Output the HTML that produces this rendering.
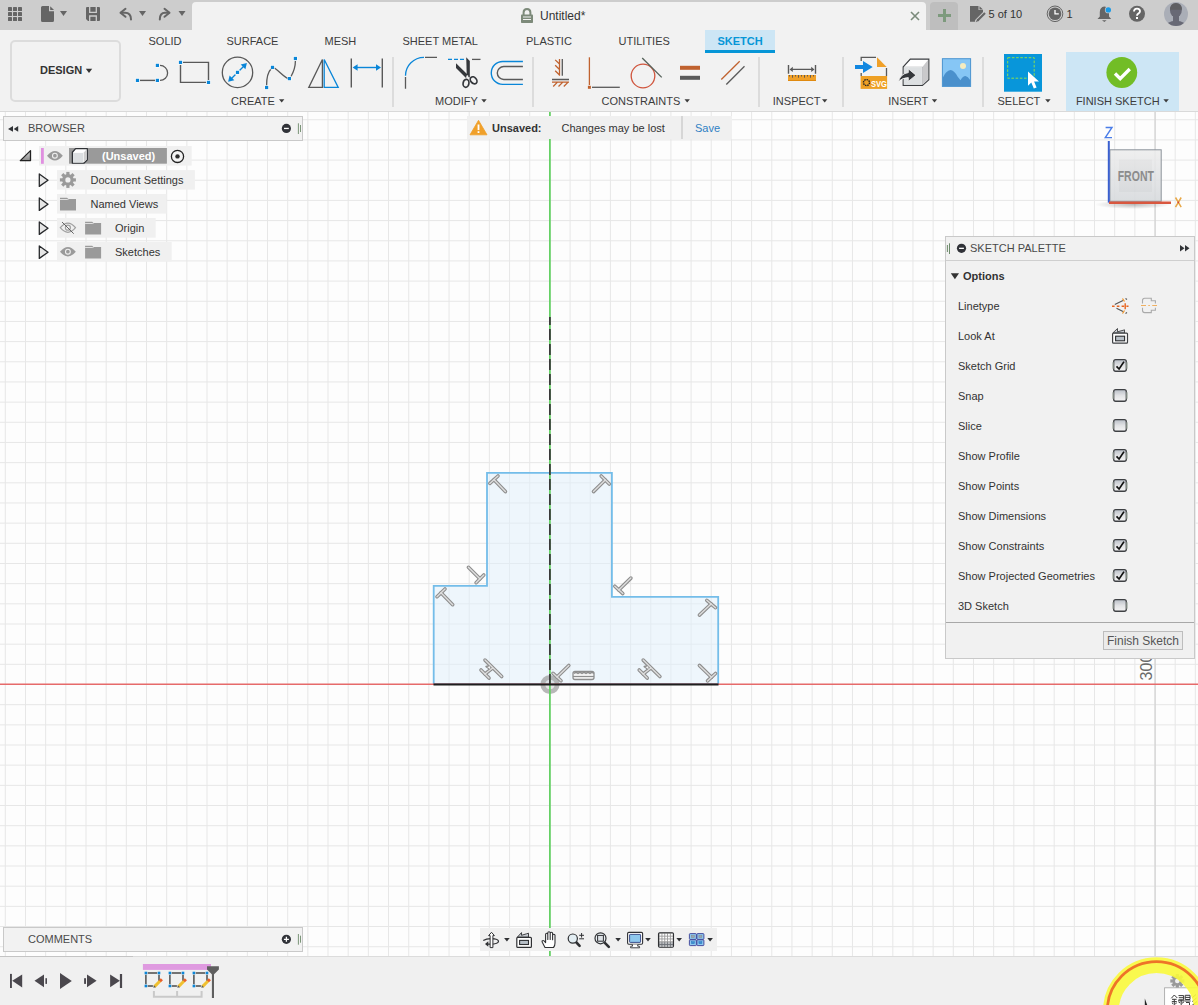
<!DOCTYPE html><html><head><meta charset="utf-8"><style>html,body{margin:0;padding:0;width:1198px;height:1005px;overflow:hidden;background:#fdfdfd;}body{position:relative;font-family:"Liberation Sans",sans-serif;}.a{position:absolute;} .t{position:absolute;white-space:nowrap;}</style></head><body><svg width="1198" height="1005" style="position:absolute;left:0;top:0"><rect x="0" y="111" width="1198" height="846" fill="#fdfdfd"/><path d="M5.31 111V956M25.48 111V956M45.65 111V956M65.82 111V956M85.99 111V956M106.16 111V956M126.33 111V956M146.50 111V956M166.67 111V956M186.84 111V956M207.01 111V956M227.18 111V956M247.35 111V956M267.52 111V956M287.69 111V956M307.86 111V956M328.03 111V956M348.20 111V956M368.37 111V956M388.54 111V956M408.71 111V956M428.88 111V956M449.05 111V956M469.22 111V956M489.39 111V956M509.56 111V956M529.73 111V956M549.90 111V956M570.07 111V956M590.24 111V956M610.41 111V956M630.58 111V956M650.75 111V956M670.92 111V956M691.09 111V956M711.26 111V956M731.43 111V956M751.60 111V956M771.77 111V956M791.94 111V956M812.11 111V956M832.28 111V956M852.45 111V956M872.62 111V956M892.79 111V956M912.96 111V956M933.13 111V956M953.30 111V956M973.47 111V956M993.64 111V956M1013.81 111V956M1033.98 111V956M1054.15 111V956M1074.32 111V956M1094.49 111V956M1114.66 111V956M1134.83 111V956M1155.00 111V956M1175.17 111V956M1195.34 111V956M0 119.74H1198M0 139.91H1198M0 160.08H1198M0 180.25H1198M0 200.42H1198M0 220.59H1198M0 240.76H1198M0 260.93H1198M0 281.10H1198M0 301.27H1198M0 321.44H1198M0 341.61H1198M0 361.78H1198M0 381.95H1198M0 402.12H1198M0 422.29H1198M0 442.46H1198M0 462.63H1198M0 482.80H1198M0 502.97H1198M0 523.14H1198M0 543.31H1198M0 563.48H1198M0 583.65H1198M0 603.82H1198M0 623.99H1198M0 644.16H1198M0 664.33H1198M0 684.50H1198M0 704.67H1198M0 724.84H1198M0 745.01H1198M0 765.18H1198M0 785.35H1198M0 805.52H1198M0 825.69H1198M0 845.86H1198M0 866.03H1198M0 886.20H1198M0 906.37H1198M0 926.54H1198M0 946.71H1198" stroke="#e7e7e7" stroke-width="1" fill="none"/><path d="M1155.1 111V956" stroke="#d2d2d2" stroke-width="1.2"/><text transform="translate(1151.8 680.4) rotate(-90)" font-family="Liberation Sans" font-size="16" fill="#6a6a6a">300</text><path d="M433.7 684.2V585.9H487V472.9H611.9V596.9H718.2V684.2Z" fill="#e0f0fb" fill-opacity="0.5" stroke="#74bde9" stroke-width="1.8"/><circle cx="550" cy="684.5" r="5" fill="#bdbdbd" fill-opacity="0.35"/><circle cx="550" cy="684.5" r="7.2" fill="none" stroke="#9c9c9c" stroke-opacity="0.72" stroke-width="4.8"/><line x1="549.9" y1="111" x2="549.9" y2="956" stroke="#66d166" stroke-width="1.8"/><line x1="0" y1="684.3" x2="1198" y2="684.3" stroke="#e66a6a" stroke-width="1.6"/><line x1="549.9" y1="317" x2="549.9" y2="684" stroke="#3a3a3a" stroke-width="1.8" stroke-dasharray="11 4" stroke-dashoffset="3"/><line x1="433.5" y1="684.4" x2="718.5" y2="684.4" stroke="#1e1e1e" stroke-width="2"/><line x1="494" y1="479.7" x2="505.4" y2="491.6" stroke="#8e8e8e" stroke-width="3.6" stroke-linecap="round"/><line x1="489.8" y1="483.4" x2="498" y2="476" stroke="#8e8e8e" stroke-width="3.6" stroke-linecap="round"/><line x1="605.2" y1="480" x2="593.5" y2="491.6" stroke="#8e8e8e" stroke-width="3.6" stroke-linecap="round"/><line x1="601.2" y1="476" x2="609.3" y2="484" stroke="#8e8e8e" stroke-width="3.6" stroke-linecap="round"/><line x1="479.9" y1="578.8" x2="468.4" y2="567.3" stroke="#8e8e8e" stroke-width="3.6" stroke-linecap="round"/><line x1="476.1" y1="582.7" x2="483.8" y2="575" stroke="#8e8e8e" stroke-width="3.6" stroke-linecap="round"/><line x1="441" y1="592.8" x2="452.7" y2="604.7" stroke="#8e8e8e" stroke-width="3.6" stroke-linecap="round"/><line x1="437" y1="596.7" x2="445" y2="589" stroke="#8e8e8e" stroke-width="3.6" stroke-linecap="round"/><line x1="618.8" y1="589.9" x2="630.9" y2="578.1" stroke="#8e8e8e" stroke-width="3.6" stroke-linecap="round"/><line x1="614.8" y1="586.2" x2="622.8" y2="593.6" stroke="#8e8e8e" stroke-width="3.6" stroke-linecap="round"/><line x1="711.1" y1="604" x2="699.4" y2="615.1" stroke="#8e8e8e" stroke-width="3.6" stroke-linecap="round"/><line x1="706.8" y1="600.3" x2="715.5" y2="607.7" stroke="#8e8e8e" stroke-width="3.6" stroke-linecap="round"/><line x1="711.5" y1="677.2" x2="699.4" y2="665.4" stroke="#8e8e8e" stroke-width="3.6" stroke-linecap="round"/><line x1="707.5" y1="680.9" x2="715.5" y2="673.5" stroke="#8e8e8e" stroke-width="3.6" stroke-linecap="round"/><line x1="557" y1="677" x2="568.8" y2="665.5" stroke="#8e8e8e" stroke-width="3.6" stroke-linecap="round"/><line x1="553" y1="673.3" x2="561" y2="680.8" stroke="#8e8e8e" stroke-width="3.6" stroke-linecap="round"/><line x1="494" y1="479.7" x2="505.4" y2="491.6" stroke="#dedede" stroke-width="1.4" stroke-linecap="round"/><line x1="489.8" y1="483.4" x2="498" y2="476" stroke="#dedede" stroke-width="1.4" stroke-linecap="round"/><line x1="605.2" y1="480" x2="593.5" y2="491.6" stroke="#dedede" stroke-width="1.4" stroke-linecap="round"/><line x1="601.2" y1="476" x2="609.3" y2="484" stroke="#dedede" stroke-width="1.4" stroke-linecap="round"/><line x1="479.9" y1="578.8" x2="468.4" y2="567.3" stroke="#dedede" stroke-width="1.4" stroke-linecap="round"/><line x1="476.1" y1="582.7" x2="483.8" y2="575" stroke="#dedede" stroke-width="1.4" stroke-linecap="round"/><line x1="441" y1="592.8" x2="452.7" y2="604.7" stroke="#dedede" stroke-width="1.4" stroke-linecap="round"/><line x1="437" y1="596.7" x2="445" y2="589" stroke="#dedede" stroke-width="1.4" stroke-linecap="round"/><line x1="618.8" y1="589.9" x2="630.9" y2="578.1" stroke="#dedede" stroke-width="1.4" stroke-linecap="round"/><line x1="614.8" y1="586.2" x2="622.8" y2="593.6" stroke="#dedede" stroke-width="1.4" stroke-linecap="round"/><line x1="711.1" y1="604" x2="699.4" y2="615.1" stroke="#dedede" stroke-width="1.4" stroke-linecap="round"/><line x1="706.8" y1="600.3" x2="715.5" y2="607.7" stroke="#dedede" stroke-width="1.4" stroke-linecap="round"/><line x1="711.5" y1="677.2" x2="699.4" y2="665.4" stroke="#dedede" stroke-width="1.4" stroke-linecap="round"/><line x1="707.5" y1="680.9" x2="715.5" y2="673.5" stroke="#dedede" stroke-width="1.4" stroke-linecap="round"/><line x1="557" y1="677" x2="568.8" y2="665.5" stroke="#dedede" stroke-width="1.4" stroke-linecap="round"/><line x1="553" y1="673.3" x2="561" y2="680.8" stroke="#dedede" stroke-width="1.4" stroke-linecap="round"/><line x1="643.2" y1="660.1" x2="659.9" y2="676.5" stroke="#8e8e8e" stroke-width="3.6" stroke-linecap="round"/><line x1="639.2" y1="670" x2="647.2" y2="678.1" stroke="#8e8e8e" stroke-width="3.6" stroke-linecap="round"/><line x1="643.2" y1="674" x2="650.6" y2="668.2" stroke="#8e8e8e" stroke-width="3.6" stroke-linecap="round"/><path d="M644.3 666.6L649.4 670.2L648.6 665.4Z" fill="#8e8e8e" stroke="#8e8e8e" stroke-width="1.6" stroke-linejoin="round"/><line x1="643.2" y1="660.1" x2="659.9" y2="676.5" stroke="#dedede" stroke-width="1.4" stroke-linecap="round"/><line x1="639.2" y1="670" x2="647.2" y2="678.1" stroke="#dedede" stroke-width="1.4" stroke-linecap="round"/><line x1="643.2" y1="674" x2="650.6" y2="668.2" stroke="#dedede" stroke-width="1.4" stroke-linecap="round"/><path d="M645.4 667L648.6 669.3L648.1 666.3Z" fill="#f4f4f4"/><line x1="485.00000000000006" y1="660.1" x2="501.7" y2="676.5" stroke="#8e8e8e" stroke-width="3.6" stroke-linecap="round"/><line x1="481.00000000000006" y1="670" x2="489.00000000000006" y2="678.1" stroke="#8e8e8e" stroke-width="3.6" stroke-linecap="round"/><line x1="485.00000000000006" y1="674" x2="492.40000000000003" y2="668.2" stroke="#8e8e8e" stroke-width="3.6" stroke-linecap="round"/><path d="M486.09999999999997 666.6L491.2 670.2L490.40000000000003 665.4Z" fill="#8e8e8e" stroke="#8e8e8e" stroke-width="1.6" stroke-linejoin="round"/><line x1="485.00000000000006" y1="660.1" x2="501.7" y2="676.5" stroke="#dedede" stroke-width="1.4" stroke-linecap="round"/><line x1="481.00000000000006" y1="670" x2="489.00000000000006" y2="678.1" stroke="#dedede" stroke-width="1.4" stroke-linecap="round"/><line x1="485.00000000000006" y1="674" x2="492.40000000000003" y2="668.2" stroke="#dedede" stroke-width="1.4" stroke-linecap="round"/><path d="M487.2 667L490.40000000000003 669.3L489.90000000000003 666.3Z" fill="#f4f4f4"/><rect x="573" y="671.5" width="21" height="8" rx="2" fill="#f4f4f4" stroke="#8e8e8e" stroke-width="1.3"/><path d="M573 676.5H594" stroke="#8e8e8e" stroke-width="1.2"/><path d="M574 673.5q2 -2 4 0q2 -2 4 0q2 -2 4 0q2 -2 4 0q2 -2 4 0" stroke="#8e8e8e" stroke-width="1.2" fill="none"/></svg><div class="a" style="left:0;top:0;width:1198px;height:30px;background:#cdcdcd"></div><div class="a" style="left:192px;top:2px;width:734px;height:28px;background:#f2f2f2;border-radius:4px 4px 0 0"></div><div class="a" style="left:930px;top:2px;width:28px;height:28px;background:#bebebe;border-radius:4px 4px 0 0"></div><svg class="a" style="left:0;top:0" width="1198" height="30"><rect x="8" y="7" width="4" height="4" rx="0.6" fill="#656565"/><rect x="8" y="12" width="4" height="4" rx="0.6" fill="#656565"/><rect x="8" y="17" width="4" height="4" rx="0.6" fill="#656565"/><rect x="13" y="7" width="4" height="4" rx="0.6" fill="#656565"/><rect x="13" y="12" width="4" height="4" rx="0.6" fill="#656565"/><rect x="13" y="17" width="4" height="4" rx="0.6" fill="#656565"/><rect x="18" y="7" width="4" height="4" rx="0.6" fill="#656565"/><rect x="18" y="12" width="4" height="4" rx="0.6" fill="#656565"/><rect x="18" y="17" width="4" height="4" rx="0.6" fill="#656565"/><path d="M42.5 6H49V11.2H54V20.5Q54 22 52.5 22H42.5Q41 22 41 20.5V7.5Q41 6 42.5 6Z" fill="#656565"/><path d="M50.2 6.2L54 10H50.2Z" fill="#656565"/><path d="M60 11H67L63.5 16Z" fill="#656565"/><path d="M139 11H146L142.5 16Z" fill="#656565"/><path d="M178.5 11H185.5L182.0 16Z" fill="#656565"/><path d="M86 8Q86 7 87 7H99Q100 7 100 8V20Q100 21 99 21H88L86 19Z" fill="#656565"/><path d="M89.7 7V12.3H96.3V7M89.7 21V16H96.3V21" stroke="#cdcdcd" stroke-width="1.3" fill="none"/><path d="M121 12.8H125Q131 12.8 131 19.5" stroke="#656565" stroke-width="2" fill="none" stroke-linecap="round"/><path d="M125.5 8.8L120.5 12.8L125.5 16.8" stroke="#656565" stroke-width="2" fill="none" stroke-linecap="round" stroke-linejoin="round"/><path d="M169 12.8H165Q159.8 12.8 159.8 19.5" stroke="#656565" stroke-width="2" fill="none" stroke-linecap="round"/><path d="M164.5 8.8L169.5 12.8L164.5 16.8" stroke="#656565" stroke-width="2" fill="none" stroke-linecap="round" stroke-linejoin="round"/><path d="M523.6 15V12.5Q523.6 9 527 9Q530.4 9 530.4 12.5V15" stroke="#7d8a7a" stroke-width="2" fill="none"/><rect x="521" y="14.5" width="12" height="8.5" rx="0.8" fill="#7d8a7a"/><path d="M523 17H531M523 19.5H531" stroke="#f2f2f2" stroke-width="1"/><path d="M911 12L919 20M919 12L911 20" stroke="#7a8a7a" stroke-width="1.6"/><path d="M944.5 9V22M938 15.5H951" stroke="#7d9a7d" stroke-width="3"/><path d="M970 6H978.5V10H983V13L976 20V21.7H970Z" fill="#656565"/><path d="M979.5 6.2L983 9.5H979.5Z" fill="#656565"/><path d="M977 21L985.5 12.5" stroke="#cdcdcd" stroke-width="4" stroke-linecap="round"/><path d="M977.3 20.7L985 13" stroke="#656565" stroke-width="2.2" stroke-linecap="butt"/><path d="M975.8 22.2L977.5 18.8L979.2 20.5Z" fill="#656565"/><circle cx="1055" cy="13.8" r="7.8" fill="none" stroke="#656565" stroke-width="1"/><circle cx="1055" cy="13.8" r="6.3" fill="#656565"/><path d="M1055 10V13.8H1058.8" stroke="#fff" stroke-width="1.3" fill="none"/><path d="M1104.3 6.5Q1100 7 1099.8 12V16.5L1097.5 19H1111.2L1109 16.5V12Q1108.7 7 1104.3 6.5Z" fill="#656565"/><path d="M1102 20.3H1106.6L1104.3 22Z" fill="#656565"/><circle cx="1108.3" cy="9.9" r="3.4" fill="#cdcdcd"/><circle cx="1108.3" cy="9.9" r="2.7" fill="#1a9ae6"/><circle cx="1137" cy="13.8" r="8" fill="#656565"/><path d="M1134 11.6Q1134 8.7 1137 8.7Q1140 8.7 1140 11.3Q1140 12.8 1138.3 13.6Q1137 14.3 1137 15.8" stroke="#fff" stroke-width="1.8" fill="none"/><rect x="1136" y="17" width="2" height="2" fill="#fff"/><clipPath id="av"><circle cx="1176" cy="14.1" r="12"/></clipPath><circle cx="1176" cy="14.1" r="12" fill="#aaaeb7"/><g clip-path="url(#av)"><ellipse cx="1175.9" cy="10.2" rx="5.9" ry="7" fill="#686975"/><path d="M1170 9.8Q1170 3 1176 3Q1182 3 1182 9.8Z" fill="#5f5f62"/><rect x="1173" y="15" width="6" height="7" fill="#686975"/><ellipse cx="1176" cy="27.2" rx="11" ry="6.4" fill="#686975"/></g></svg><div class="t" style="left:540px;top:9.5px;font-size:12px;line-height:12px;color:#333;">Untitled*</div><div class="t" style="left:988.5px;top:9px;font-size:11px;line-height:11px;color:#333;">5 of 10</div><div class="t" style="left:1066.5px;top:9px;font-size:11px;line-height:11px;color:#333;">1</div><div class="a" style="left:0;top:30px;width:1198px;height:81px;background:#f2f2f2;border-bottom:1px solid #d9d9d9"></div><div class="a" style="left:10px;top:40px;width:107px;height:58px;border:2px solid #dcdcdc;border-radius:5px"></div><div class="t" style="left:40px;top:65px;font-size:11px;line-height:11px;color:#333;font-weight:bold;">DESIGN</div><div class="t" style="left:148.5px;top:36px;font-size:11px;line-height:11px;color:#3c3c3c;">SOLID</div><div class="t" style="left:226.5px;top:36px;font-size:11px;line-height:11px;color:#3c3c3c;">SURFACE</div><div class="t" style="left:324.5px;top:36px;font-size:11px;line-height:11px;color:#3c3c3c;">MESH</div><div class="t" style="left:402.5px;top:36px;font-size:11px;line-height:11px;color:#3c3c3c;">SHEET METAL</div><div class="t" style="left:526.0px;top:36px;font-size:11px;line-height:11px;color:#3c3c3c;">PLASTIC</div><div class="t" style="left:618.5px;top:36px;font-size:11px;line-height:11px;color:#3c3c3c;">UTILITIES</div><div class="a" style="left:705px;top:30px;width:70px;height:23px;background:#cde6f5"></div><div class="a" style="left:705px;top:50px;width:70px;height:3px;background:#0696d7"></div><div class="t" style="left:717.5px;top:36px;font-size:11px;line-height:11px;color:#0696d7;font-weight:bold;">SKETCH</div><div class="a" style="left:1066px;top:52px;width:113px;height:59px;background:#cde6f5"></div><div class="t" style="left:231.0px;top:96px;font-size:11px;line-height:11px;color:#3c3c3c;">CREATE</div><div class="t" style="left:435.0px;top:96px;font-size:11px;line-height:11px;color:#3c3c3c;">MODIFY</div><div class="t" style="left:601.5px;top:96px;font-size:11px;line-height:11px;color:#3c3c3c;">CONSTRAINTS</div><div class="t" style="left:772.8px;top:96px;font-size:11px;line-height:11px;color:#3c3c3c;">INSPECT</div><div class="t" style="left:888.2px;top:96px;font-size:11px;line-height:11px;color:#3c3c3c;">INSERT</div><div class="t" style="left:997.5px;top:96px;font-size:11px;line-height:11px;color:#3c3c3c;">SELECT</div><div class="t" style="left:1075.9px;top:96px;font-size:11px;line-height:11px;color:#3c3c3c;">FINISH SKETCH</div><svg class="a" style="left:0;top:30px" width="1198" height="81" viewBox="0 30 1198 81"><path d="M140 80.4H155" stroke="#595959" stroke-width="1.4"/><path d="M160 65.4A7.6 7.5 0 0 1 160 80.4" stroke="#595959" stroke-width="1.3" fill="none"/><rect x="135.3" y="78.20000000000002" width="4.4" height="4.4" fill="#fff" fill-opacity="0.7"/><rect x="135.9" y="78.80000000000001" width="3.2" height="3.2" fill="#0a86d8"/><rect x="155.20000000000002" y="78.20000000000002" width="4.4" height="4.4" fill="#fff" fill-opacity="0.7"/><rect x="155.8" y="78.80000000000001" width="3.2" height="3.2" fill="#0a86d8"/><rect x="155.20000000000002" y="63.2" width="4.4" height="4.4" fill="#fff" fill-opacity="0.7"/><rect x="155.8" y="63.800000000000004" width="3.2" height="3.2" fill="#0a86d8"/><path d="M183 62.4H208.5V80M206 82.4H180.5V65" stroke="#595959" stroke-width="1.4" fill="none"/><rect x="178.3" y="60.199999999999996" width="4.4" height="4.4" fill="#fff" fill-opacity="0.7"/><rect x="178.9" y="60.8" width="3.2" height="3.2" fill="#0a86d8"/><rect x="206.3" y="80.20000000000002" width="4.4" height="4.4" fill="#fff" fill-opacity="0.7"/><rect x="206.9" y="80.80000000000001" width="3.2" height="3.2" fill="#0a86d8"/><circle cx="237.5" cy="72.4" r="15.2" stroke="#595959" stroke-width="1.3" fill="none"/><path d="M230.5 79.4L235.5 74.4M239.5 70.4L244.5 65.4" stroke="#0a86d8" stroke-width="1.4"/><path d="M228.1 81.8L229.6 75.6L234.3 80.3Z M246.9 63L245.4 69.2L240.7 64.5Z" fill="#0a86d8"/><rect x="235.3" y="70.20000000000002" width="4.4" height="4.4" fill="#fff" fill-opacity="0.7"/><rect x="235.9" y="70.80000000000001" width="3.2" height="3.2" fill="#0a86d8"/><path d="M266.6 85.5C266.6 78 268 72 271 69 M274.5 68C280 72 284 77 288 78.5 M291 76.5C293.5 72 295.4 66 295.4 61" stroke="#595959" stroke-width="1.3" fill="none"/><rect x="264.4" y="85.30000000000001" width="4.4" height="4.4" fill="#fff" fill-opacity="0.7"/><rect x="265.0" y="85.9" width="3.2" height="3.2" fill="#0a86d8"/><rect x="270.29999999999995" y="65.20000000000002" width="4.4" height="4.4" fill="#fff" fill-opacity="0.7"/><rect x="270.9" y="65.80000000000001" width="3.2" height="3.2" fill="#0a86d8"/><rect x="287.19999999999993" y="76.4" width="4.4" height="4.4" fill="#fff" fill-opacity="0.7"/><rect x="287.79999999999995" y="77.0" width="3.2" height="3.2" fill="#0a86d8"/><rect x="293.19999999999993" y="56.3" width="4.4" height="4.4" fill="#fff" fill-opacity="0.7"/><rect x="293.79999999999995" y="56.9" width="3.2" height="3.2" fill="#0a86d8"/><path d="M308.8 87.4H322.4V59.5Z" stroke="#595959" stroke-width="1.3" fill="none" stroke-linejoin="miter"/><path d="M324.2 59.5V87.4H338.2Z" stroke="#0a86d8" stroke-width="1.3" fill="none"/><path d="M351.3 58.5V87.5M382.3 58.5V87.5" stroke="#595959" stroke-width="1.4"/><path d="M355 67.5H378.5" stroke="#0a86d8" stroke-width="1.4"/><path d="M352.6 67.5L357.6 64.3V70.7Z M381 67.5L376 64.3V70.7Z" fill="#0a86d8"/><path d="M405.5 77V88.7M425 57.3H437" stroke="#595959" stroke-width="1.3"/><path d="M405.5 75.7A18.5 18.4 0 0 1 424 57.3" stroke="#0a86d8" stroke-width="1.3" fill="none"/><path d="M448 59.4H464.5" stroke="#0a86d8" stroke-width="1.3" stroke-dasharray="4 2"/><path d="M472 59.4H480.5" stroke="#595959" stroke-width="1.3"/><path d="M466.2 57.3L469.8 61V77.5L466.8 76.5Z" fill="#34373b"/><path d="M456 63.3L467.5 74.5L466 78L456 68Z" fill="#34373b"/><ellipse cx="466" cy="83.3" rx="2.9" ry="4" transform="rotate(10 466 83.3)" stroke="#34373b" stroke-width="1.7" fill="none"/><ellipse cx="473.6" cy="80.3" rx="2.9" ry="3.9" transform="rotate(-40 473.6 80.3)" stroke="#34373b" stroke-width="1.7" fill="none"/><circle cx="467.4" cy="76.2" r="1" fill="#f2f2f2"/><path d="M522.9 61.5H502.7A11.4 11.4 0 0 0 502.7 84.35H522.9" stroke="#0a86d8" stroke-width="1.4" fill="none"/><path d="M522.9 66.5H503.8A6.5 6.5 0 0 0 503.8 79.5H522.9" stroke="#595959" stroke-width="1.4" fill="none"/><path d="M562.3 59.1V75.8M552 79.5H569" stroke="#595959" stroke-width="1.3"/><path d="M559.5 59V75.8M555.2 59.9L559.5 64M555.2 65.3L559.5 69.5M555.2 70.7L559.5 75M552 82.1H569M553.2 86.5L557.5 82.1M558.5 86.5L562.8 82.1M563.8 86.5L568.1 82.1" stroke="#c0622f" stroke-width="1.3" fill="none"/><path d="M589.4 57.3V85" stroke="#c0622f" stroke-width="1.3"/><rect x="587.9" y="85.8" width="3" height="3" fill="#c0622f"/><path d="M592 87.3H619.8" stroke="#595959" stroke-width="1.3"/><circle cx="643" cy="76" r="11.8" stroke="#d0553d" stroke-width="1.3" fill="none"/><path d="M642.2 58L661.7 77.4" stroke="#56625a" stroke-width="1.3"/><rect x="680" y="65.8" width="20" height="4" fill="#c0622f"/><rect x="680" y="75.8" width="20" height="4" fill="#595959"/><path d="M721.3 79.5L739.7 61.2" stroke="#c0622f" stroke-width="1.3"/><path d="M726.3 84.5L744.5 66.3" stroke="#595959" stroke-width="1.3"/><path d="M788.5 65V73.8M815.5 65V73.8M791 69.4H813" stroke="#595959" stroke-width="1.4"/><path d="M789.5 69.4L792.8 66.8V72Z M814.5 69.4L811.2 66.8V72Z" fill="#595959"/><rect x="788" y="75" width="28" height="6" fill="#f0a028"/><rect x="788" y="80" width="28" height="1" fill="#e08a10"/><path d="M789.5 75V76.5M792.5 75V77.7M795.5 75V76.5M798.5 75V77.7M801.5 75V76.5M804.5 75V77.7M807.5 75V76.5M810.5 75V77.7M813.5 75V76.5" stroke="#555" stroke-width="0.9"/><path d="M861.2 61V57.3H876M886.5 68V76M861.2 73V76" stroke="#595959" stroke-width="1.3" fill="none"/><path d="M877 57.3V67H886.7Z" fill="#f0a028"/><rect x="860.6" y="76" width="26.5" height="12.9" fill="#eea024"/><circle cx="866.5" cy="82.6" r="3" stroke="#222" stroke-width="1.4" fill="none" stroke-dasharray="1.5 0.8"/><text x="871" y="86.6" font-family="Liberation Sans" font-weight="bold" font-size="9.5" fill="#fff" textLength="16" lengthAdjust="spacingAndGlyphs">SVG</text><path d="M855 65.1H864V69H855Z M863 61L872.7 67L863 73Z" fill="#1287e0"/><path d="M903.2 66.9L910.3 59.1H928.8V79.7L922.4 85.4H903.2Z" fill="#fff" stroke="#3a3d40" stroke-width="1.2"/><path d="M903.8 67.5H921.8V84.8H903.8Z" fill="#dde0e2"/><path d="M922.4 66.9L928.2 59.7V79.5L922.4 85Z" fill="#c9c9cb"/><path d="M903.2 66.9H922.4V85.4" stroke="#3a3d40" stroke-width="0.6" fill="none" stroke-opacity="0.3"/><path d="M898.3 81.8Q900.5 73.8 908.3 72.6V68.8L916 75.2L908.3 81.4V77.6Q902.5 77.6 898.3 81.8Z" fill="#34373b" stroke="#fafafa" stroke-width="0.8"/><rect x="942.4" y="58.7" width="28.2" height="27.7" fill="#86c6f5" stroke="#4b94d0" stroke-width="1"/><circle cx="963" cy="66.1" r="3" fill="#f5ecc0"/><path d="M942.9 77.5Q946 70.5 950.5 70Q954 70 957.5 76.5L960.5 80.2Q963 76 965.5 76Q968 76.5 970.1 80V85.9H942.9Z" fill="#4a90cc"/><rect x="1004" y="54" width="38" height="37.7" fill="#0896da"/><rect x="1007.7" y="57.7" width="26.5" height="20.5" stroke="#8ee04a" stroke-width="1" fill="none" stroke-dasharray="2.6 1.6"/><path d="M1028 71.5V85.8L1031.3 82.6L1033.8 88.6L1036.6 87.4L1034.1 81.6H1039Z" fill="#fff"/><circle cx="1121.8" cy="72.5" r="15.4" fill="#72bd26"/><path d="M1115 73.5L1120.2 78.6L1129.8 69" stroke="#fff" stroke-width="3.4" fill="none"/><path d="M279 99.3H284.4L281.7 102.6Z" fill="#3c3c3c"/><path d="M481.3 99.3H486.7L484.0 102.6Z" fill="#3c3c3c"/><path d="M684.5 99.3H689.9L687.2 102.6Z" fill="#3c3c3c"/><path d="M822 99.3H827.4L824.7 102.6Z" fill="#3c3c3c"/><path d="M931.8 99.3H937.1999999999999L934.5 102.6Z" fill="#3c3c3c"/><path d="M1045.2 99.3H1050.6000000000001L1047.9 102.6Z" fill="#3c3c3c"/><path d="M1163.4 99.3H1168.8000000000002L1166.1000000000001 102.6Z" fill="#3c3c3c"/><path d="M85.8 68.8H92.2L89 73Z" fill="#333"/></svg><div class="a" style="left:392px;top:57px;width:2px;height:50px;background:#dcdcdc"></div><div class="a" style="left:531.5px;top:57px;width:2px;height:50px;background:#dcdcdc"></div><div class="a" style="left:758px;top:57px;width:2px;height:50px;background:#dcdcdc"></div><div class="a" style="left:842px;top:57px;width:2px;height:50px;background:#dcdcdc"></div><div class="a" style="left:982px;top:57px;width:2px;height:50px;background:#dcdcdc"></div><div class="a" style="left:3px;top:116px;width:298px;height:23px;background:#f2f2f2;border:1px solid #c9c9c9"></div><div class="t" style="left:28px;top:123px;font-size:11px;line-height:11px;color:#4a4a4a;">BROWSER</div><svg class="a" style="left:0;top:111px" width="310" height="160" viewBox="0 111 310 160"><path d="M8 128.9L13 126V131.8Z M13.7 128.9L18.2 126V131.8Z" fill="#303236"/><circle cx="286.4" cy="128.4" r="4.6" fill="#303238"/><rect x="284" y="127.8" width="4.8" height="1.3" fill="#fff"/><path d="M298.4 123.3V134M300.5 125V132" stroke="#6d8a6a" stroke-width="0.9"/><rect x="39" y="146" width="152.7" height="19.6" fill="#f0f0f0"/><rect x="57" y="170.1" width="137.9" height="19.5" fill="#f0f0f0"/><rect x="57" y="194" width="109.5" height="19.6" fill="#f0f0f0"/><rect x="57" y="218" width="98.7" height="19.7" fill="#f0f0f0"/><rect x="57" y="242" width="114.7" height="19.6" fill="#f0f0f0"/><linearGradient id="tg" x1="0" y1="0" x2="0" y2="1"><stop offset="0" stop-color="#d8d8d8"/><stop offset="1" stop-color="#8a8a8a"/></linearGradient><path d="M20.3 160.6H30.5V150.6Z" fill="url(#tg)" stroke="#222" stroke-width="1.3" stroke-linejoin="round"/><rect x="41" y="148" width="2.8" height="15.8" fill="#e08fe0"/><path d="M47.0 155.7Q54.9 146.1 62.8 155.7Q54.9 165.29999999999998 47.0 155.7Z" fill="#9a9a9a"/><circle cx="54.9" cy="155.7" r="2.4" fill="none" stroke="#f0f0f0" stroke-width="1.1"/><rect x="69" y="148" width="97.9" height="15.7" fill="#9a9a9a"/><path d="M72.4 152.3L75.6 148.6H87.3V159.7L83.8 163.2H72.4Z" fill="#fff" stroke="#2f3236" stroke-width="1.3" stroke-linejoin="round"/><path d="M73.1 152.9H83.2V162.6H73.1Z" fill="#dcdfe1"/><path d="M83.8 152.6L86.7 149.2V159.5L83.8 162.6Z" fill="#cfcfcf"/><circle cx="177.5" cy="156.4" r="6.1" fill="#f4f4f4" stroke="#222" stroke-width="1.3"/><circle cx="177.5" cy="156.4" r="2.2" fill="#2c2c2c"/><path d="M39.3 174V186.4L48.0 180.2Z" fill="#e6e6e6" stroke="#26282b" stroke-width="1.3" stroke-linejoin="round"/><path d="M39.3 198V210.4L48.0 204.2Z" fill="#e6e6e6" stroke="#26282b" stroke-width="1.3" stroke-linejoin="round"/><path d="M39.3 222V234.4L48.0 228.2Z" fill="#e6e6e6" stroke="#26282b" stroke-width="1.3" stroke-linejoin="round"/><path d="M39.3 246V258.4L48.0 252.2Z" fill="#e6e6e6" stroke="#26282b" stroke-width="1.3" stroke-linejoin="round"/><rect x="66.30000000000001" y="171.9" width="3.2" height="4" fill="#9a9a9a" transform="rotate(0 67.9 179.9)"/><rect x="66.30000000000001" y="171.9" width="3.2" height="4" fill="#9a9a9a" transform="rotate(45 67.9 179.9)"/><rect x="66.30000000000001" y="171.9" width="3.2" height="4" fill="#9a9a9a" transform="rotate(90 67.9 179.9)"/><rect x="66.30000000000001" y="171.9" width="3.2" height="4" fill="#9a9a9a" transform="rotate(135 67.9 179.9)"/><rect x="66.30000000000001" y="171.9" width="3.2" height="4" fill="#9a9a9a" transform="rotate(180 67.9 179.9)"/><rect x="66.30000000000001" y="171.9" width="3.2" height="4" fill="#9a9a9a" transform="rotate(225 67.9 179.9)"/><rect x="66.30000000000001" y="171.9" width="3.2" height="4" fill="#9a9a9a" transform="rotate(270 67.9 179.9)"/><rect x="66.30000000000001" y="171.9" width="3.2" height="4" fill="#9a9a9a" transform="rotate(315 67.9 179.9)"/><circle cx="67.9" cy="179.9" r="5.8" fill="#9a9a9a"/><circle cx="67.9" cy="179.9" r="2.6" fill="#f0f0f0"/><path d="M60 197.7H67L68.4 199.1H76V210.39999999999998H60Z" fill="#9a9a9a"/><path d="M60 199.5H67.6L68.6 199.1" stroke="#e8e8e8" stroke-width="0.9" fill="none"/><path d="M60.300000000000004 227.7Q67.9 218.5 75.5 227.7Q67.9 236.89999999999998 60.300000000000004 227.7Z" fill="none" stroke="#a0a0a0" stroke-width="1.2"/><circle cx="67.9" cy="227.7" r="2.5" fill="none" stroke="#a0a0a0" stroke-width="1.2"/><path d="M62.00000000000001 222.0L73.7 233.7" stroke="#555" stroke-width="0.9"/><path d="M85.1 221.7H92.1L93.5 223.1H101.1V234.39999999999998H85.1Z" fill="#9a9a9a"/><path d="M85.1 223.5H92.69999999999999L93.69999999999999 223.1" stroke="#e8e8e8" stroke-width="0.9" fill="none"/><path d="M60.00000000000001 251.7Q67.9 242.1 75.80000000000001 251.7Q67.9 261.3 60.00000000000001 251.7Z" fill="#9a9a9a"/><circle cx="67.9" cy="251.7" r="2.4" fill="none" stroke="#f0f0f0" stroke-width="1.1"/><path d="M85.1 245.7H92.1L93.5 247.1H101.1V258.4H85.1Z" fill="#9a9a9a"/><path d="M85.1 247.5H92.69999999999999L93.69999999999999 247.1" stroke="#e8e8e8" stroke-width="0.9" fill="none"/></svg><div class="t" style="left:102px;top:151px;font-size:11px;line-height:11px;color:#fff;font-weight:bold;">(Unsaved)</div><div class="t" style="left:90.5px;top:175px;font-size:11px;line-height:11px;color:#333;">Document Settings</div><div class="t" style="left:90.5px;top:199px;font-size:11px;line-height:11px;color:#333;">Named Views</div><div class="t" style="left:115px;top:223px;font-size:11px;line-height:11px;color:#333;">Origin</div><div class="t" style="left:115px;top:247px;font-size:11px;line-height:11px;color:#333;">Sketches</div><div class="a" style="left:3px;top:927px;width:298px;height:23px;background:#f2f2f2;border:1px solid #c9c9c9"></div><div class="t" style="left:28px;top:934px;font-size:11px;line-height:11px;color:#4a4a4a;">COMMENTS</div><svg class="a" style="left:270px;top:927px" width="40" height="26" viewBox="270 927 40 26"><circle cx="286.4" cy="939.3" r="4.6" fill="#303238"/><path d="M283.9 939.3H288.9M286.4 936.8V941.8" stroke="#fff" stroke-width="1.3"/><path d="M298.4 934V944.7M300.5 935.7V942.7" stroke="#6d8a6a" stroke-width="0.9"/></svg><div class="a" style="left:0;top:956px;width:1198px;height:49px;background:#f0f0f0;border-top:1px solid #dcdcdc"></div><div class="a" style="left:0;top:956px;width:133px;height:1px;background:#c4c4c4"></div><div class="a" style="left:467px;top:116px;width:265px;height:23px;background:#f0f0f0"></div><svg class="a" style="left:466px;top:114px" width="30" height="26" viewBox="466 114 30 26"><path d="M478.5 120.3L487 134.8H470Z" fill="#f0a02a" stroke="#f0a02a" stroke-width="0.8" stroke-linejoin="round"/><rect x="477.6" y="124.5" width="1.8" height="5.6" fill="#fff"/><rect x="477.6" y="131.2" width="1.8" height="1.8" fill="#fff"/></svg><div class="a" style="left:681px;top:116px;width:1.5px;height:23px;background:#d6d6d6"></div><div class="t" style="left:492px;top:122.5px;font-size:11px;line-height:11px;color:#333;font-weight:bold;">Unsaved:</div><div class="t" style="left:561.5px;top:122.5px;font-size:11px;line-height:11px;color:#333;">Changes may be lost</div><div class="t" style="left:695px;top:122.5px;font-size:11px;line-height:11px;color:#2f80c4;">Save</div><div class="a" style="left:945px;top:236px;width:248px;height:421px;background:#f1f1f1;border:1px solid #c9c9c9"></div><div class="a" style="left:946px;top:260px;width:248px;height:1px;background:#cfcfcf"></div><div class="a" style="left:946px;top:622px;width:248px;height:1px;background:#a8a8a8"></div><div class="t" style="left:970px;top:243px;font-size:11px;line-height:11px;color:#4a4a4a;">SKETCH PALETTE</div><div class="t" style="left:963px;top:271px;font-size:11px;line-height:11px;color:#333;font-weight:bold;">Options</div><div class="t" style="left:958px;top:300.5px;font-size:11px;line-height:11px;color:#333;">Linetype</div><div class="t" style="left:958px;top:330.5px;font-size:11px;line-height:11px;color:#333;">Look At</div><div class="t" style="left:958px;top:360.5px;font-size:11px;line-height:11px;color:#333;">Sketch Grid</div><div class="t" style="left:958px;top:390.5px;font-size:11px;line-height:11px;color:#333;">Snap</div><div class="t" style="left:958px;top:420.5px;font-size:11px;line-height:11px;color:#333;">Slice</div><div class="t" style="left:958px;top:450.5px;font-size:11px;line-height:11px;color:#333;">Show Profile</div><div class="t" style="left:958px;top:480.5px;font-size:11px;line-height:11px;color:#333;">Show Points</div><div class="t" style="left:958px;top:510.5px;font-size:11px;line-height:11px;color:#333;">Show Dimensions</div><div class="t" style="left:958px;top:540.5px;font-size:11px;line-height:11px;color:#333;">Show Constraints</div><div class="t" style="left:958px;top:570.5px;font-size:11px;line-height:11px;color:#333;">Show Projected Geometries</div><div class="t" style="left:958px;top:600.5px;font-size:11px;line-height:11px;color:#333;">3D Sketch</div><svg class="a" style="left:940px;top:230px" width="258" height="430" viewBox="940 230 258 430"><linearGradient id="cbg" x1="0" y1="0" x2="0" y2="1"><stop offset="0" stop-color="#b9bec6"/><stop offset="0.5" stop-color="#e2e3e5"/><stop offset="1" stop-color="#f4f4f4"/></linearGradient><path d="M947.4 245V252M949.5 243.3V254" stroke="#6d8a6a" stroke-width="1"/><circle cx="961.5" cy="248.3" r="4.6" fill="#303238"/><rect x="959.1" y="247.7" width="4.8" height="1.3" fill="#fff"/><path d="M1180 245L1184.5 248.2L1180 251.4Z M1185 245L1189.5 248.2L1185 251.4Z" fill="#303236"/><path d="M950.8 273.2H959L954.9 279.2Z" fill="#333"/><path d="M1112 306.3H1128.5" stroke="#e8641e" stroke-width="1.5" stroke-dasharray="2.6 2.2"/><path d="M1125.2 303.3V309.3" stroke="#e8641e" stroke-width="1.4"/><path d="M1114.8 304.6L1123 300.4M1116.5 308.2L1123 311.6" stroke="#555" stroke-width="1.1"/><path d="M1122.5 298.5L1124.5 301.5M1122.5 313.5L1124.5 310.5" stroke="#f0901e" stroke-width="1.2"/><path d="M1125.5 298.5L1127 299.5M1125.5 313.5L1127 312.5" stroke="#555" stroke-width="1.1"/><path d="M1142.5 303.5V300.5Q1142.5 298.3 1144.7 298.3H1151.3V300.7H1155.4V303.5M1142.5 307.8V310.3Q1142.5 312.6 1144.7 312.6H1151.3V310.3H1155.4V307.8" stroke="#aaa" stroke-width="1.1" fill="none"/><path d="M1141 305.5H1157" stroke="#f0b060" stroke-width="1.1" stroke-dasharray="5 2.3 1.6 2.3"/><path d="M1112.8 333L1117.5 328.5V331.8L1123 330.3L1124.5 329.8V333Z" fill="#c8ccd2" stroke="#3d3f42" stroke-width="0.9" stroke-linejoin="round"/><rect x="1112.6" y="333.2" width="14.9" height="10" rx="0.9" fill="#fff" stroke="#3d3f42" stroke-width="1.2"/><rect x="1115.6" y="336.2" width="9" height="4.6" fill="#b8c0c8" stroke="#2c2e31" stroke-width="1.1"/><rect x="1113.7" y="359.65" width="12.6" height="11.6" rx="2" fill="url(#cbg)" stroke="#3f4144" stroke-width="1.3"/><path d="M1113.05 362.2V368.8M1126.95 362.2V368.8" stroke="#9aa39a" stroke-width="1.3"/><path d="M1116.5 366.3L1119.1 369L1124.0 361.6" stroke="#111" stroke-width="1.7" fill="none"/><rect x="1113.7" y="389.65" width="12.6" height="11.6" rx="2" fill="url(#cbg)" stroke="#3f4144" stroke-width="1.3"/><path d="M1113.05 392.2V398.8M1126.95 392.2V398.8" stroke="#9aa39a" stroke-width="1.3"/><rect x="1113.7" y="419.65" width="12.6" height="11.6" rx="2" fill="url(#cbg)" stroke="#3f4144" stroke-width="1.3"/><path d="M1113.05 422.2V428.8M1126.95 422.2V428.8" stroke="#9aa39a" stroke-width="1.3"/><rect x="1113.7" y="449.65" width="12.6" height="11.6" rx="2" fill="url(#cbg)" stroke="#3f4144" stroke-width="1.3"/><path d="M1113.05 452.2V458.8M1126.95 452.2V458.8" stroke="#9aa39a" stroke-width="1.3"/><path d="M1116.5 456.3L1119.1 459L1124.0 451.6" stroke="#111" stroke-width="1.7" fill="none"/><rect x="1113.7" y="479.65" width="12.6" height="11.6" rx="2" fill="url(#cbg)" stroke="#3f4144" stroke-width="1.3"/><path d="M1113.05 482.2V488.8M1126.95 482.2V488.8" stroke="#9aa39a" stroke-width="1.3"/><path d="M1116.5 486.3L1119.1 489L1124.0 481.6" stroke="#111" stroke-width="1.7" fill="none"/><rect x="1113.7" y="509.65" width="12.6" height="11.6" rx="2" fill="url(#cbg)" stroke="#3f4144" stroke-width="1.3"/><path d="M1113.05 512.2V518.8M1126.95 512.2V518.8" stroke="#9aa39a" stroke-width="1.3"/><path d="M1116.5 516.3L1119.1 519L1124.0 511.6" stroke="#111" stroke-width="1.7" fill="none"/><rect x="1113.7" y="539.65" width="12.6" height="11.6" rx="2" fill="url(#cbg)" stroke="#3f4144" stroke-width="1.3"/><path d="M1113.05 542.2V548.8M1126.95 542.2V548.8" stroke="#9aa39a" stroke-width="1.3"/><path d="M1116.5 546.3L1119.1 549L1124.0 541.6" stroke="#111" stroke-width="1.7" fill="none"/><rect x="1113.7" y="569.65" width="12.6" height="11.6" rx="2" fill="url(#cbg)" stroke="#3f4144" stroke-width="1.3"/><path d="M1113.05 572.2V578.8M1126.95 572.2V578.8" stroke="#9aa39a" stroke-width="1.3"/><path d="M1116.5 576.3L1119.1 579L1124.0 571.6" stroke="#111" stroke-width="1.7" fill="none"/><rect x="1113.7" y="599.65" width="12.6" height="11.6" rx="2" fill="url(#cbg)" stroke="#3f4144" stroke-width="1.3"/><path d="M1113.05 602.2V608.8M1126.95 602.2V608.8" stroke="#9aa39a" stroke-width="1.3"/></svg><div class="a" style="left:1103px;top:631px;width:78px;height:17px;background:#ebebeb;border:1px solid #bdbdbd"></div><div class="t" style="left:1107px;top:634.5px;font-size:12px;line-height:12px;color:#555;">Finish Sketch</div><div class="a" style="left:480px;top:928px;width:237px;height:23px;background:#f0f0f0"></div><svg class="a" style="left:478px;top:926px" width="242" height="28" viewBox="478 926 242 28"><path d="M483.3 940.6Q486 938.6 491 938.6Q498.5 938.8 498.5 941.2Q498.5 944 490 944.2H486" stroke="#2f3033" stroke-width="1.2" fill="none"/><path d="M485 943.9L488.3 941.3V946.7Z" fill="#2f3033"/><path d="M490.1 947.6V935.6H488.6L491.5 932.3L494.4 935.6H492.9V947.6Z" fill="#fff" stroke="#2f3033" stroke-width="1"/><path d="M489.5 941.2Q495 941 498.5 941.2" stroke="#2f3033" stroke-width="0" fill="none"/><path d="M504.1 937.9H509.70000000000005L506.90000000000003 941.6Z" fill="#2f3033"/><path d="M615.3 937.9H620.9L618.0999999999999 941.6Z" fill="#2f3033"/><path d="M645.2 937.9H650.8000000000001L648.0 941.6Z" fill="#2f3033"/><path d="M676.4 937.9H682.0L679.1999999999999 941.6Z" fill="#2f3033"/><path d="M707.3 937.9H712.9L710.0999999999999 941.6Z" fill="#2f3033"/><path d="M517.3 937.2L521.5 932.6V935.3L526.5 933.8L528.5 933.2V937.2Z" fill="#c8ccd2" stroke="#2f3033" stroke-width="0.9" stroke-linejoin="round"/><rect x="516.8" y="937.3" width="14.6" height="10.1" rx="1" fill="#fff" stroke="#2f3033" stroke-width="1.2"/><rect x="519.6" y="940.4" width="8.9" height="4.1" fill="#b8c0c8" stroke="#2f3033" stroke-width="1.1"/><path d="M545 947.5L542.3 942.3Q541.6 940.6 543 940.5Q544 940.4 545.6 942.6V934.6Q545.6 933.2 546.7 933.2Q547.8 933.2 547.8 934.6V939.5V932.8Q547.8 931.7 549 931.7Q550.2 931.7 550.2 932.8V939.5V933.3Q550.2 932.2 551.4 932.2Q552.6 932.2 552.6 933.3V939.8V935.3Q552.6 934.3 553.8 934.3Q555 934.3 555 935.3V943Q555 946 553.5 947.5Z" fill="#fff" stroke="#2f3033" stroke-width="1.1" stroke-linejoin="round"/><path d="M576 942L579.6 945.8" stroke="#2f3033" stroke-width="2.6" stroke-linecap="round"/><circle cx="572.8" cy="938.6" r="4.6" fill="#e3eef3" stroke="#2f3033" stroke-width="1.2"/><path d="M579.2 935.3H584M581.6 933V937.6M579.2 938.8H584" stroke="#2f3033" stroke-width="1"/><path d="M604.6 942.6L608.8 946.8" stroke="#2f3033" stroke-width="2.6" stroke-linecap="round"/><circle cx="600.5" cy="938.3" r="5.5" fill="#eaf0f3" stroke="#2f3033" stroke-width="1.2"/><rect x="597.6" y="935.4" width="5.8" height="5.8" fill="#dde2e6" stroke="#2f3033" stroke-width="1"/><rect x="627.6" y="932.4" width="15" height="11.9" rx="1.2" fill="#fff" stroke="#2f3033" stroke-width="1.1"/><rect x="629.6" y="934.4" width="11" height="8" rx="0.6" fill="#8ec8ee" stroke="#2c3e80" stroke-width="0.9"/><path d="M632.5 944.6V946.2H631.2Q630.6 946.2 630.6 947V947.8H639.6V947Q639.6 946.2 639 946.2H637.7V944.6" fill="#fff" stroke="#2f3033" stroke-width="0.9"/><rect x="658.5" y="932.8" width="15" height="14.4" rx="1.2" fill="#9a9a9a" stroke="#2f3033" stroke-width="1.1"/><rect x="659" y="942.3" width="14" height="4.4" fill="#6e7278"/><rect x="659.6" y="933.8" width="1.9" height="1.9" fill="#fff" fill-opacity="1"/><rect x="659.6" y="936.5999999999999" width="1.9" height="1.9" fill="#fff" fill-opacity="1"/><rect x="659.6" y="939.4" width="1.9" height="1.9" fill="#fff" fill-opacity="1"/><rect x="659.6" y="942.1999999999999" width="1.9" height="1.9" fill="#fff" fill-opacity="0.55"/><rect x="659.6" y="945.0" width="1.9" height="1.9" fill="#fff" fill-opacity="0.55"/><rect x="662.4" y="933.8" width="1.9" height="1.9" fill="#fff" fill-opacity="1"/><rect x="662.4" y="936.5999999999999" width="1.9" height="1.9" fill="#fff" fill-opacity="1"/><rect x="662.4" y="939.4" width="1.9" height="1.9" fill="#fff" fill-opacity="1"/><rect x="662.4" y="942.1999999999999" width="1.9" height="1.9" fill="#fff" fill-opacity="0.55"/><rect x="662.4" y="945.0" width="1.9" height="1.9" fill="#fff" fill-opacity="0.55"/><rect x="665.2" y="933.8" width="1.9" height="1.9" fill="#fff" fill-opacity="1"/><rect x="665.2" y="936.5999999999999" width="1.9" height="1.9" fill="#fff" fill-opacity="1"/><rect x="665.2" y="939.4" width="1.9" height="1.9" fill="#fff" fill-opacity="1"/><rect x="665.2" y="942.1999999999999" width="1.9" height="1.9" fill="#fff" fill-opacity="0.55"/><rect x="665.2" y="945.0" width="1.9" height="1.9" fill="#fff" fill-opacity="0.55"/><rect x="668.0" y="933.8" width="1.9" height="1.9" fill="#fff" fill-opacity="1"/><rect x="668.0" y="936.5999999999999" width="1.9" height="1.9" fill="#fff" fill-opacity="1"/><rect x="668.0" y="939.4" width="1.9" height="1.9" fill="#fff" fill-opacity="1"/><rect x="668.0" y="942.1999999999999" width="1.9" height="1.9" fill="#fff" fill-opacity="0.55"/><rect x="668.0" y="945.0" width="1.9" height="1.9" fill="#fff" fill-opacity="0.55"/><rect x="670.8000000000001" y="933.8" width="1.9" height="1.9" fill="#fff" fill-opacity="1"/><rect x="670.8000000000001" y="936.5999999999999" width="1.9" height="1.9" fill="#fff" fill-opacity="1"/><rect x="670.8000000000001" y="939.4" width="1.9" height="1.9" fill="#fff" fill-opacity="1"/><rect x="670.8000000000001" y="942.1999999999999" width="1.9" height="1.9" fill="#fff" fill-opacity="0.55"/><rect x="670.8000000000001" y="945.0" width="1.9" height="1.9" fill="#fff" fill-opacity="0.55"/><rect x="689.4" y="933.6" width="7" height="5.8" rx="0.8" fill="#8ec8ee" stroke="#3b3e96" stroke-width="0.9"/><rect x="691.4" y="935.5" width="3" height="2" fill="#9aa7b0" stroke="#888" stroke-width="0.5"/><rect x="689.4" y="939.8000000000001" width="7" height="5.8" rx="0.8" fill="#8ec8ee" stroke="#3b3e96" stroke-width="0.9"/><rect x="691.4" y="941.7" width="3" height="2" fill="#3d8fd0" stroke="#2a78c0" stroke-width="0.5"/><rect x="696.9" y="933.6" width="7" height="5.8" rx="0.8" fill="#8ec8ee" stroke="#3b3e96" stroke-width="0.9"/><rect x="698.9" y="935.5" width="3" height="2" fill="#9aa7b0" stroke="#888" stroke-width="0.5"/><rect x="696.9" y="939.8000000000001" width="7" height="5.8" rx="0.8" fill="#8ec8ee" stroke="#3b3e96" stroke-width="0.9"/><rect x="698.9" y="941.7" width="3" height="2" fill="#3d8fd0" stroke="#2a78c0" stroke-width="0.5"/></svg><svg class="a" style="left:0;top:956px" width="1198" height="49" viewBox="0 956 1198 49"><rect x="10" y="973.9" width="1.9" height="14.1" fill="#4a474d"/><path d="M12.2 980.8L22.2 974.4V987.5Z" fill="#4a474d"/><path d="M34.5 980.8L44 974.6V987.3Z" fill="#4a474d"/><rect x="45.4" y="978.2" width="1.6" height="5.7" fill="#4a474d"/><path d="M60 973L71.8 981L60 989.1Z" fill="#4a474d"/><rect x="84.1" y="978.2" width="1.9" height="5.7" fill="#4a474d"/><path d="M87 974.4L96.6 980.8L87 987.3Z" fill="#4a474d"/><path d="M110.1 974.4L119.9 980.8L110.1 987.3Z" fill="#4a474d"/><rect x="119.9" y="974" width="2.2" height="14" fill="#4a474d"/><rect x="142.9" y="964" width="68.1" height="5.9" fill="#df9ae0"/><path d="M147.70000000000002 973H157.20000000000002M159.0 974.8V982M145.9 974.8V984.2M147.70000000000002 986H152.9" stroke="#4a4a4a" stroke-width="1.45"/><rect x="144.6" y="971.7" width="2.6" height="2.6" fill="#0a86d8"/><rect x="157.7" y="971.7" width="2.6" height="2.6" fill="#0a86d8"/><rect x="144.6" y="984.7" width="2.6" height="2.6" fill="#0a86d8"/><path d="M154.5 986.6L160.3 980.8" stroke="#f0c030" stroke-width="3"/><path d="M159.9 981.2L161.9 979.2" stroke="#e8602a" stroke-width="3"/><path d="M153.3 987.8L153.9 985.2L155.9 987.2Z" fill="#555"/><path d="M171.70000000000002 973H181.20000000000002M183.0 974.8V982M169.9 974.8V984.2M171.70000000000002 986H176.9" stroke="#4a4a4a" stroke-width="1.45"/><rect x="168.6" y="971.7" width="2.6" height="2.6" fill="#0a86d8"/><rect x="181.7" y="971.7" width="2.6" height="2.6" fill="#0a86d8"/><rect x="168.6" y="984.7" width="2.6" height="2.6" fill="#0a86d8"/><path d="M178.5 986.6L184.3 980.8" stroke="#f0c030" stroke-width="3"/><path d="M183.9 981.2L185.9 979.2" stroke="#e8602a" stroke-width="3"/><path d="M177.3 987.8L177.9 985.2L179.9 987.2Z" fill="#555"/><path d="M195.70000000000002 973H205.20000000000002M207.0 974.8V982M193.9 974.8V984.2M195.70000000000002 986H200.9" stroke="#4a4a4a" stroke-width="1.45"/><rect x="192.6" y="971.7" width="2.6" height="2.6" fill="#0a86d8"/><rect x="205.7" y="971.7" width="2.6" height="2.6" fill="#0a86d8"/><rect x="192.6" y="984.7" width="2.6" height="2.6" fill="#0a86d8"/><path d="M202.5 986.6L208.3 980.8" stroke="#f0c030" stroke-width="3"/><path d="M207.9 981.2L209.9 979.2" stroke="#e8602a" stroke-width="3"/><path d="M201.3 987.8L201.9 985.2L203.9 987.2Z" fill="#555"/><path d="M153.9 991V996.8H201.6V991M177.1 991V996.8" stroke="#c9c9c9" stroke-width="2" fill="none"/><path d="M207 966.3H218.9V969.5L214.1 974.3H211.8L207 969.5Z" fill="#5f5f5f"/><rect x="211.9" y="973" width="2.1" height="25" fill="#5f5f5f"/><rect x="1175.7" y="974" width="3.2" height="4" fill="#9a9a9a" transform="rotate(0 1177.3 981)"/><rect x="1175.7" y="974" width="3.2" height="4" fill="#9a9a9a" transform="rotate(45 1177.3 981)"/><rect x="1175.7" y="974" width="3.2" height="4" fill="#9a9a9a" transform="rotate(90 1177.3 981)"/><rect x="1175.7" y="974" width="3.2" height="4" fill="#9a9a9a" transform="rotate(135 1177.3 981)"/><rect x="1175.7" y="974" width="3.2" height="4" fill="#9a9a9a" transform="rotate(180 1177.3 981)"/><rect x="1175.7" y="974" width="3.2" height="4" fill="#9a9a9a" transform="rotate(225 1177.3 981)"/><rect x="1175.7" y="974" width="3.2" height="4" fill="#9a9a9a" transform="rotate(270 1177.3 981)"/><rect x="1175.7" y="974" width="3.2" height="4" fill="#9a9a9a" transform="rotate(315 1177.3 981)"/><circle cx="1177.3" cy="981" r="4.8" fill="#9a9a9a"/><circle cx="1177.3" cy="981" r="2.3" fill="#f0f0f0"/><rect x="1164.6" y="987.8" width="40" height="20" fill="#fff" stroke="#aaa" stroke-width="0.9"/><path d="M1174.3 995L1171.3 998.3M1174.3 995L1177.3 998M1172 999.3H1176.6M1171.8 1001.6H1176.8M1174.3 999.3V1005M1172.3 1002.6L1173 1004.2M1176.3 1002.6L1175.6 1004.2" stroke="#3a3a3a" stroke-width="1" fill="none"/><path d="M1178.5 995.6H1183.6V999.8H1178.5M1178.8 997.7H1183.6M1178 1000.8H1184.5M1181.2 999.8V1005M1178.5 1002L1180.3 1003M1184 1001.8L1182 1003.3" stroke="#3a3a3a" stroke-width="1" fill="none"/><path d="M1185.2 995.3H1190V999.5H1185.2ZM1185.2 997.4H1190M1184.6 1001H1190.6M1186 1002.5H1189.5V1005" stroke="#3a3a3a" stroke-width="1" fill="none"/><path d="M1196 994.5L1192.5 997.5M1196.5 998L1192.3 1001.5M1197 1001.5L1192 1005.5" stroke="#3a3a3a" stroke-width="1" fill="none"/><clipPath id="brc"><rect x="0" y="956.5" width="1198" height="49"/></clipPath><g clip-path="url(#brc)"><circle cx="1156.5" cy="1010.8" r="45.6" fill="none" stroke="#fafa3c" stroke-opacity="0.9" stroke-width="15.8"/><circle cx="1156.5" cy="1010.8" r="49.2" fill="none" stroke="#ee7428" stroke-width="2.7"/></g><path d="M1144.8 998.6V1005L1147.2 1005Z" fill="#222"/></svg><svg class="a" style="left:1090px;top:115px" width="108" height="100" viewBox="1090 115 108 100"><radialGradient id="vsh" cx="0.5" cy="0.5" r="0.5"><stop offset="0" stop-color="#000" stop-opacity="0.26"/><stop offset="1" stop-color="#000" stop-opacity="0"/></radialGradient><ellipse cx="1133" cy="204.5" rx="38" ry="4.5" fill="url(#vsh)"/><linearGradient id="vcg" x1="0" y1="0" x2="0" y2="1"><stop offset="0" stop-color="#ededed"/><stop offset="1" stop-color="#d6d9dc"/></linearGradient><rect x="1109.9" y="149.8" width="51.3" height="51.5" fill="url(#vcg)" fill-opacity="0.88" stroke="#8c939b" stroke-width="1"/><rect x="1119" y="159.5" width="33" height="32.5" fill="#000" fill-opacity="0.025"/><text x="1117.7" y="180.9" font-family="Liberation Sans" font-weight="bold" font-size="14.6" fill="#8c8c8c" textLength="36.2" lengthAdjust="spacingAndGlyphs">FRONT</text><path d="M1108.8 141V202.6" stroke="#3a60d0" stroke-width="2"/><path d="M1109 202.8H1171" stroke="#d9573f" stroke-width="2.4"/><path d="M1105.6 127.5H1112L1105.3 137.6H1112" stroke="#4a7de8" stroke-width="1.4" fill="none"/><path d="M1175.5 197.5L1181.2 207.2M1181.2 197.5L1175.5 207.2" stroke="#e8a848" stroke-width="1.5"/><circle cx="1178.3" cy="202.3" r="0.9" fill="#d04040"/></svg></body></html>
